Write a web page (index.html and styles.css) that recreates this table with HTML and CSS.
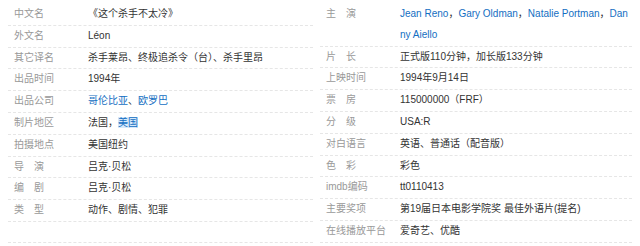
FILE: index.html
```html
<!DOCTYPE html>
<html lang="zh-CN">
<head>
<meta charset="utf-8">
<link rel="stylesheet" href="styles.css">
</head>
<body>
<div class="basic-info">
  <dl class="col col-left">
    <div class="item"><dt class="name">中文名</dt><dd class="value">《这个杀手不太冷》</dd></div>
    <div class="item"><dt class="name">外文名</dt><dd class="value">Léon</dd></div>
    <div class="item"><dt class="name">其它译名</dt><dd class="value">杀手莱昂、终极追杀令（台）、杀手里昂</dd></div>
    <div class="item"><dt class="name">出品时间</dt><dd class="value">1994年</dd></div>
    <div class="item"><dt class="name">出品公司</dt><dd class="value"><a class="link">哥伦比亚</a>、<a class="link">欧罗巴</a></dd></div>
    <div class="item"><dt class="name">制片地区</dt><dd class="value">法国，<a class="link hl">美国</a></dd></div>
    <div class="item"><dt class="name">拍摄地点</dt><dd class="value">美国纽约</dd></div>
    <div class="item"><dt class="name"><span class="sp">导</span>演</dt><dd class="value">吕克·贝松</dd></div>
    <div class="item"><dt class="name"><span class="sp">编</span>剧</dt><dd class="value">吕克·贝松</dd></div>
    <div class="item"><dt class="name"><span class="sp">类</span>型</dt><dd class="value">动作、剧情、犯罪</dd></div>
    <div class="item"><dt class="name"></dt><dd class="value"></dd></div>
  </dl>
  <dl class="col col-right">
    <div class="item tall"><dt class="name"><span class="sp">主</span>演</dt><dd class="value actors"><a class="link">Jean Reno</a>，<a class="link">Gary Oldman</a>，<a class="link">Natalie Portman</a>，<a class="link">Danny Aiello</a></dd></div>
    <div class="item"><dt class="name"><span class="sp">片</span>长</dt><dd class="value">正式版110分钟，加长版133分钟</dd></div>
    <div class="item"><dt class="name">上映时间</dt><dd class="value">1994年9月14日</dd></div>
    <div class="item"><dt class="name"><span class="sp">票</span>房</dt><dd class="value">115000000（FRF）</dd></div>
    <div class="item"><dt class="name"><span class="sp">分</span>级</dt><dd class="value">USA:R</dd></div>
    <div class="item"><dt class="name">对白语言</dt><dd class="value">英语、普通话（配音版）</dd></div>
    <div class="item"><dt class="name"><span class="sp">色</span>彩</dt><dd class="value">彩色</dd></div>
    <div class="item"><dt class="name">imdb编码</dt><dd class="value">tt0110413</dd></div>
    <div class="item"><dt class="name">主要奖项</dt><dd class="value">第19届日本电影学院奖 最佳外语片(提名)</dd></div>
    <div class="item"><dt class="name">在线播放平台</dt><dd class="value">爱奇艺、优酷</dd></div>
  </dl>
</div>
</body>
</html>
```
FILE: styles.css
```css
html, body {
  margin: 0;
  padding: 0;
  background: #ffffff;
}
body {
  font-family: "Liberation Sans", Arial, "Noto Sans CJK SC", sans-serif;
  font-size: 10px;
  color: #333333;
}
.basic-info {
  display: flex;
  gap: 7px;
  padding: 4px 8px 0 8px;
}
.col {
  margin: 0;
  display: flex;
  flex-direction: column;
}
.col-left {
  width: 305px;
}
.col-right {
  width: 312px;
}
.item {
  display: flex;
  align-items: flex-start;
  min-height: 20.8px;
  border-bottom: 1px dashed #e6e6e6;
  box-sizing: border-box;
}
.name {
  width: 74px;
  flex: none;
  padding-left: 6px;
  color: #999999;
  line-height: 20.8px;
  white-space: nowrap;
}
.sp {
  letter-spacing: 1em;
}
.value {
  margin: 0;
  flex: 1;
  line-height: 20.8px;
  color: #333333;
}
.actors {
  word-break: break-all;
  padding-right: 3px;
}
.link {
  color: #136ec2;
  text-decoration: none;
}
.hl {
  background: #d6e9fb;
}
```
